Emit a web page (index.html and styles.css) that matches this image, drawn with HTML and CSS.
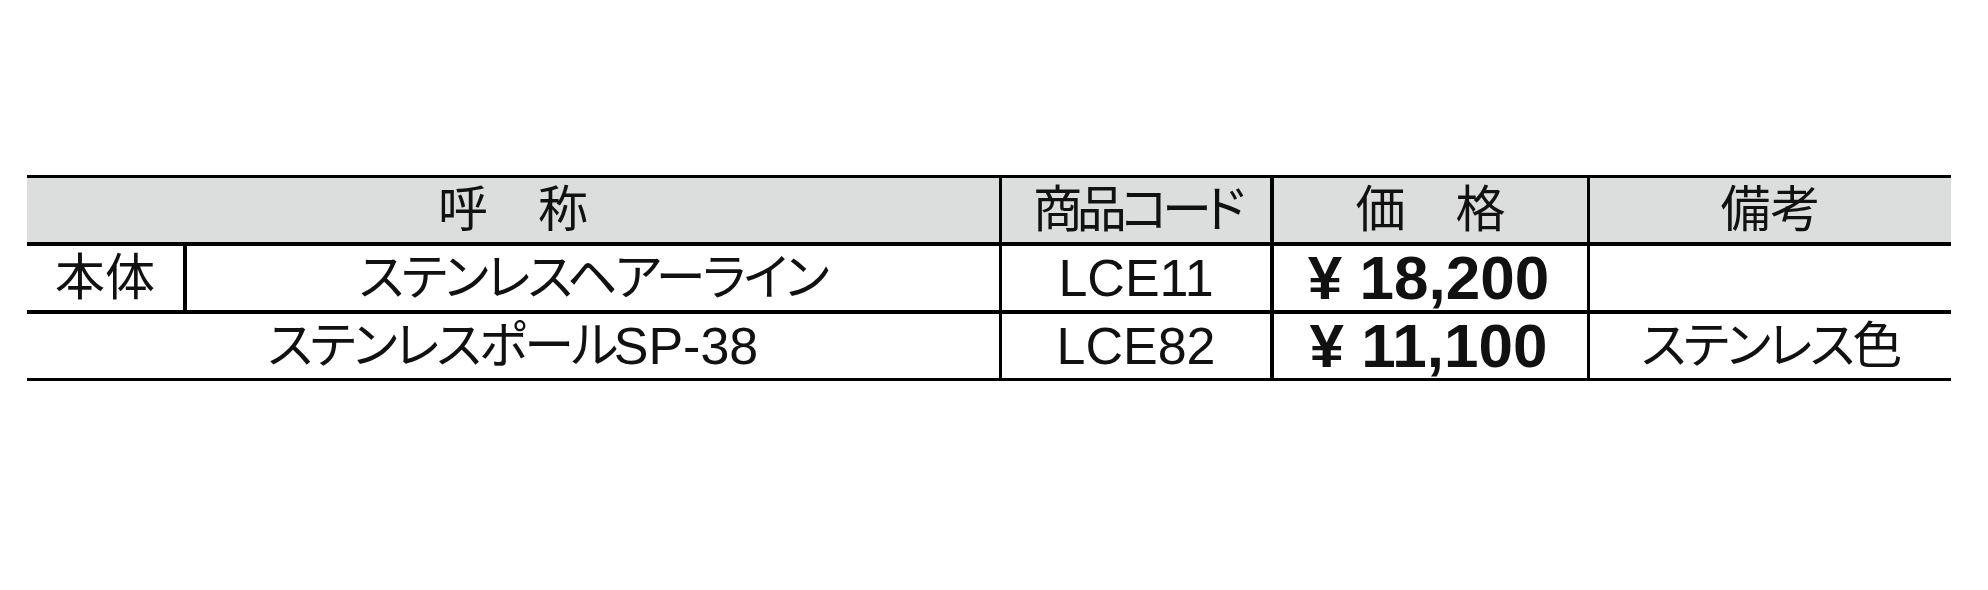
FILE: index.html
```html
<!DOCTYPE html>
<html lang="ja">
<head>
<meta charset="utf-8">
<title>価格表</title>
<link rel="stylesheet" href="styles.css">
</head>
<body>
<div class="table">
  <div class="cell head span2">呼　称</div>
  <div class="cell head bl3 tight2">商品コード</div>
  <div class="cell head bl4">価　格</div>
  <div class="cell head bl3">備考</div>

  <div class="cell row1">本体</div>
  <div class="cell row1 bl4 tight">ステンレスヘアーライン</div>
  <div class="cell row1 bl3 code">LCE11</div>
  <div class="cell row1 bl4 price">¥ 18,200</div>
  <div class="cell row1 bl3"></div>

  <div class="cell row2 span2 tight">ステンレスポール<span class="latin">SP-38</span></div>
  <div class="cell row2 bl3 code">LCE82</div>
  <div class="cell row2 bl4 price">¥ 11,100</div>
  <div class="cell row2 bl3 tight">ステンレス色</div>
</div>
</body>
</html>
```

FILE: styles.css
```css
html, body {
  margin: 0;
  padding: 0;
  background: #ffffff;
}

body {
  padding-top: 175px;
  padding-left: 27px;
  font-family: "Liberation Sans", "Noto Sans CJK JP", sans-serif;
  color: #111111;
}

.table {
  width: 1924px;
  display: grid;
  grid-template-columns: 156px 816px 271px 317px 364px;
  grid-template-rows: 68px 68px 67px;
  border-top: 3px solid #000;
}

.cell {
  box-sizing: border-box;
  display: flex;
  align-items: center;
  justify-content: center;
  font-size: 50px;
  line-height: 1;
  font-feature-settings: "palt";
  white-space: nowrap;
  border-bottom: 4px solid #000;
}

.head {
  background: #dcdddd;
}

.row2 {
  border-bottom-width: 3px;
}

.span2 {
  grid-column: span 2;
}

.bl3 {
  border-left: 3px solid #000;
}

.bl4 {
  border-left: 4px solid #000;
}

.tight {
  letter-spacing: -2.5px;
}

.tight2 {
  letter-spacing: -6px;
}

.latin {
  font-size: 52px;
  letter-spacing: 0;
  margin-left: -2px;
}

.code {
  font-size: 52px;
}

.price {
  font-size: 62px;
  font-weight: 700;
  padding-right: 4px;
}
```
